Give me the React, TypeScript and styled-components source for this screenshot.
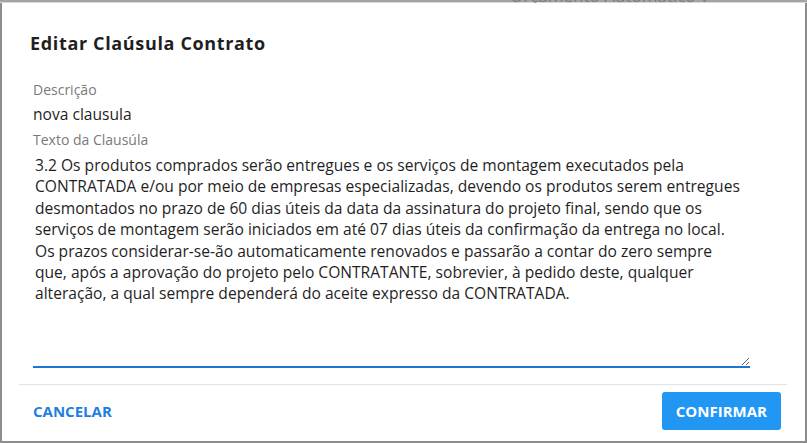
import React from "react";
import styled, { createGlobalStyle } from "styled-components";

const GlobalStyle = createGlobalStyle`
  html, body { margin: 0; padding: 0; }
  body {
    background: #8d8d8d;
    font-family: "Open Sans", "Liberation Sans", sans-serif;
    overflow: hidden;
  }
`;

const Page = styled.div`
  width: 807px;
  height: 443px;
  display: flex;
  flex-direction: column;
  background: #8d8d8d;
`;

const BackdropStrip = styled.div`
  height: 3px;
  overflow: hidden;
  background: linear-gradient(#a3a3a3 0 2px, #d8d8d8 2px 3px);
  padding-left: 510px;
`;

const BackdropText = styled.div`
  font-size: 17px;
  line-height: 17px;
  margin-top: -13px;
  color: #7c7c7c;
  text-decoration: underline;
  white-space: nowrap;
`;

const Dialog = styled.div`
  flex: 1;
  margin: 0 2px 2px 2px;
  background: #ffffff;
  display: flex;
  flex-direction: column;
`;

const Title = styled.h2`
  margin: 0;
  padding: 28px 28px 0;
  font-size: 18px;
  line-height: 24px;
  font-weight: 700;
  letter-spacing: 0.65px;
  color: #1f1f1f;
`;

const Content = styled.div`
  padding: 25px 55px 0 31px;
  display: flex;
  flex-direction: column;
`;

const Label = styled.label<{ $gap?: number }>`
  font-size: 14px;
  line-height: 20px;
  color: #7a7a7a;
  margin-top: ${(p) => p.$gap ?? 0}px;
`;

const Value = styled.div`
  margin-top: 3px;
  font-size: 15.6px;
  line-height: 22px;
  color: #1f1f1f;
`;

const TextArea = styled.textarea`
  display: block;
  width: 100%;
  box-sizing: border-box;
  height: 218px;
  margin: 0;
  padding: 5px 5px 0 2px;
  border: none;
  border-bottom: 2px solid #1976d2;
  outline: none;
  resize: vertical;
  font-family: "Open Sans", "Liberation Sans", sans-serif;
  font-size: 15.6px;
  line-height: 21.4px;
  color: #1f1f1f;
  background: transparent;
`;

const Footer = styled.div`
  margin: 16px 18px 0 17px;
  border-top: 1px solid #e3e3e3;
  padding: 7px 6px 0 0;
  display: flex;
  justify-content: space-between;
  align-items: center;
`;

const Button = styled.button<{ $primary?: boolean }>`
  font-family: "Open Sans", "Liberation Sans", sans-serif;
  font-size: 15px;
  font-weight: 700;
  height: 38px;
  padding: 0 14px;
  border: none;
  border-radius: 3px;
  cursor: pointer;
  background: ${(p) => (p.$primary ? "#2196f3" : "transparent")};
  color: ${(p) => (p.$primary ? "#ffffff" : "#1e7fe0")};
`;

const clause =
  "3.2 Os produtos comprados serão entregues e os serviços de montagem executados pela CONTRATADA e/ou por meio de empresas especializadas, devendo os produtos serem entregues desmontados no prazo de 60 dias úteis da data da assinatura do projeto final, sendo que os serviços de montagem serão iniciados em até 07 dias úteis da confirmação da entrega no local. Os prazos considerar-se-ão automaticamente renovados e passarão a contar do zero sempre que, após a aprovação do projeto pelo CONTRATANTE, sobrevier, à pedido deste, qualquer alteração, a qual sempre dependerá do aceite expresso da CONTRATADA.";

export default function App() {
  return (
    <>
      <GlobalStyle />
      <Page>
        <BackdropStrip>
          <BackdropText>Orçamento Automático ↓</BackdropText>
        </BackdropStrip>
        <Dialog>
          <Title>Editar Claúsula Contrato</Title>
          <Content>
            <Label>Descrição</Label>
            <Value>nova clausula</Value>
            <Label $gap={5}>Texto da Clausúla</Label>
            <TextArea defaultValue={clause} spellCheck={false} />
          </Content>
          <Footer>
            <Button>CANCELAR</Button>
            <Button $primary>CONFIRMAR</Button>
          </Footer>
        </Dialog>
      </Page>
    </>
  );
}
